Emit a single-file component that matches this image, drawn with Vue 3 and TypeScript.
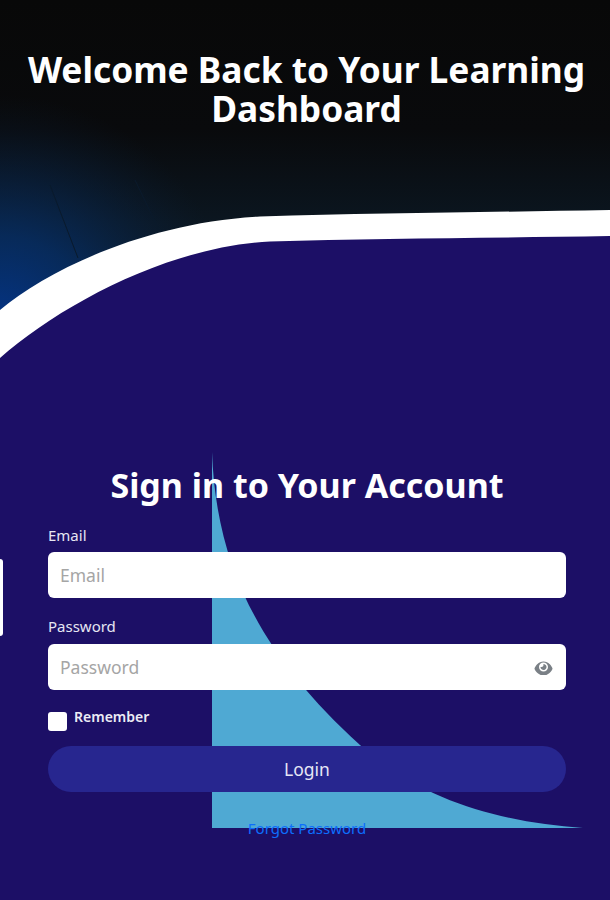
<script setup lang="ts">
import { ref } from 'vue'

const email = ref('')
const password = ref('')
const remember = ref(false)
</script>

<template>
  <main class="page">
    <svg class="backdrop" viewBox="0 0 610 900" aria-hidden="true">
      <defs>
        <linearGradient id="sky" x1="0" y1="0" x2="0" y2="1">
          <stop offset="0" stop-color="#080808" />
          <stop offset="0.35" stop-color="#090a0c" />
          <stop offset="0.6" stop-color="#0b1620" />
          <stop offset="1" stop-color="#0c1e33" />
        </linearGradient>
        <radialGradient id="glow" gradientUnits="userSpaceOnUse" cx="0" cy="330" r="235">
          <stop offset="0" stop-color="#04358a" stop-opacity="1" />
          <stop offset="0.4" stop-color="#06306b" stop-opacity="0.75" />
          <stop offset="1" stop-color="#0b2038" stop-opacity="0" />
        </radialGradient>
      </defs>
      <rect width="610" height="370" fill="url(#sky)" />
      <rect width="610" height="370" fill="url(#glow)" />
      <path d="M50 185 L78 258 M135 180 L160 232" stroke="#0a1a2c" stroke-width="1" fill="none" />
      <path
        d="M0 310 C50 268 150 222 260 216.5 C380 213 500 212 610 210 L610 240 L0 362 Z"
        fill="#fff"
      />
      <path
        d="M0 358 C60 305 170 246 270 241.5 C380 238 500 238 610 236 L610 900 L0 900 Z"
        fill="#1c0f66"
      />
      <path d="M212 452 C216 560 255 650 360 745 C420 800 500 822 583 828 L212 828 Z" fill="#4fa9d3" />
    </svg>
    <span class="edge-tab"></span>

    <header class="hero">
      <h1>Welcome Back to Your Learning Dashboard</h1>
    </header>

    <form class="login" @submit.prevent>
      <h2>Sign in to Your Account</h2>

      <label class="field">
        <span>Email</span>
        <input v-model="email" type="email" placeholder="Email" />
      </label>

      <label class="field field-password">
        <span>Password</span>
        <span class="input-wrap">
          <input v-model="password" type="password" placeholder="Password" />
          <svg class="eye" viewBox="0 0 576 512" aria-hidden="true">
            <path
              d="M288 80c-81 0-146 37-193 81-47 43-78 95-93 131-3 8-3 17 0 25 15 36 46 88 93 131 47 44 112 81 193 81s146-37 193-81c47-43 78-95 93-131 3-8 3-17 0-25-15-36-46-88-93-131-47-44-112-81-193-81zM144 256a144 144 0 1 1 288 0 144 144 0 1 1-288 0zm144-64c0 35-29 64-64 64-7 0-14-1-20-3-6-2-12 1-12 7 0 8 1 15 3 23 14 51 67 82 118 68s82-67 68-118c-11-42-48-70-89-72-6 0-9 6-7 12 2 6 3 13 3 20z"
            />
          </svg>
        </span>
      </label>

      <label class="remember">
        <input v-model="remember" type="checkbox" />
        <span>Remember</span>
      </label>

      <button type="submit" class="submit">Login</button>
      <a class="forgot" href="#" @click.prevent>Forgot Password</a>
    </form>
  </main>
</template>

<style scoped>
.page {
  position: relative;
  width: 610px;
  height: 900px;
  overflow: hidden;
  background: #1c0f66;
  font-family: "Noto Sans", sans-serif;
  color: #fff;
}
.backdrop {
  position: absolute;
  inset: 0;
  width: 610px;
  height: 900px;
}
.edge-tab {
  position: absolute;
  left: -6px;
  top: 559px;
  width: 9px;
  height: 77px;
  border-radius: 3px;
  background: #fff;
}
.hero {
  position: relative;
  height: 465px;
  padding: 50px 0 0 3px;
  box-sizing: border-box;
}
h1 {
  margin: 0;
  font-size: 35.3px;
  line-height: 39px;
  font-weight: 700;
  text-align: center;
}
.login {
  position: relative;
  display: flex;
  flex-direction: column;
  padding: 0 44px 0 48px;
}
h2 {
  margin: 0 0 21px;
  font-size: 34px;
  line-height: 40px;
  font-weight: 700;
  text-align: center;
}
.field {
  display: flex;
  flex-direction: column;
  gap: 8px;
  margin-bottom: 19px;
  font-size: 15px;
  line-height: 18px;
  color: #e6e6f2;
}
.field-password {
  gap: 9px;
  margin-bottom: 22px;
}
.input-wrap {
  position: relative;
  display: block;
}
input[type="email"],
input[type="password"] {
  display: block;
  width: 100%;
  height: 46px;
  box-sizing: border-box;
  padding: 0 12px;
  border: 0;
  border-radius: 6px;
  background: #fff;
  font: 17.5px "Noto Sans", sans-serif;
  color: #333;
  outline: none;
}
input::placeholder {
  color: #a5a5a5;
  opacity: 1;
}
.eye {
  position: absolute;
  right: 13px;
  top: 15px;
  width: 19px;
  height: 16px;
  fill: #7a8086;
}
.remember {
  display: flex;
  align-items: flex-start;
  gap: 7px;
  height: 19px;
  margin-bottom: 15px;
  font-size: 14px;
  line-height: 10px;
  font-weight: 600;
  color: #ececf5;
}
.remember input {
  appearance: none;
  width: 19px;
  height: 19px;
  margin: 0;
  border-radius: 3px;
  background: #fff;
}
.submit {
  height: 46px;
  border: 0;
  border-radius: 23px;
  background: #27268f;
  color: #e6e6f5;
  font: 17.5px "Noto Sans", sans-serif;
}
.forgot {
  margin-top: 26px;
  font-size: 15px;
  line-height: 20px;
  text-align: center;
  color: #0d6efd;
  text-decoration: none;
}
</style>
